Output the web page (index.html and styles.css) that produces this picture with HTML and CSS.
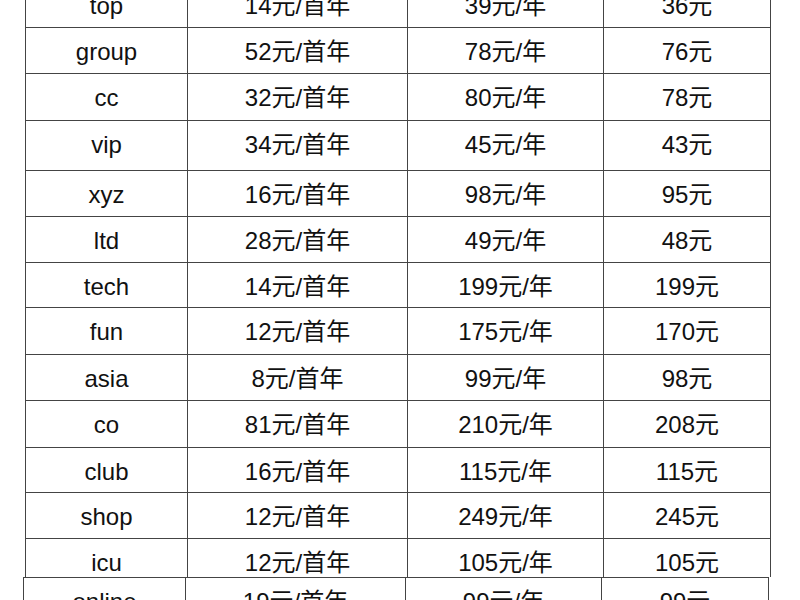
FILE: index.html
```html
<!DOCTYPE html>
<html lang="zh-CN">
<head>
<meta charset="utf-8">
<title>域名价格表</title>
<link rel="stylesheet" href="styles.css">
</head>
<body>
<div class="sheet">
  <div class="row h46"><div class="cell">top</div><div class="cell">14元/首年</div><div class="cell">39元/年</div><div class="cell">36元</div></div>
  <div class="row h46"><div class="cell">group</div><div class="cell">52元/首年</div><div class="cell">78元/年</div><div class="cell">76元</div></div>
  <div class="row h47"><div class="cell">cc</div><div class="cell">32元/首年</div><div class="cell">80元/年</div><div class="cell">78元</div></div>
  <div class="row h50"><div class="cell">vip</div><div class="cell">34元/首年</div><div class="cell">45元/年</div><div class="cell">43元</div></div>
  <div class="row h46"><div class="cell">xyz</div><div class="cell">16元/首年</div><div class="cell">98元/年</div><div class="cell">95元</div></div>
  <div class="row h46"><div class="cell">ltd</div><div class="cell">28元/首年</div><div class="cell">49元/年</div><div class="cell">48元</div></div>
  <div class="row h45"><div class="cell">tech</div><div class="cell">14元/首年</div><div class="cell">199元/年</div><div class="cell">199元</div></div>
  <div class="row h47"><div class="cell">fun</div><div class="cell">12元/首年</div><div class="cell">175元/年</div><div class="cell">170元</div></div>
  <div class="row h46"><div class="cell">asia</div><div class="cell">8元/首年</div><div class="cell">99元/年</div><div class="cell">98元</div></div>
  <div class="row h47"><div class="cell">co</div><div class="cell">81元/首年</div><div class="cell">210元/年</div><div class="cell">208元</div></div>
  <div class="row h45"><div class="cell">club</div><div class="cell">16元/首年</div><div class="cell">115元/年</div><div class="cell">115元</div></div>
  <div class="row h46"><div class="cell">shop</div><div class="cell">12元/首年</div><div class="cell">249元/年</div><div class="cell">245元</div></div>
  <div class="row h39"><div class="cell">icu</div><div class="cell">12元/首年</div><div class="cell">105元/年</div><div class="cell">105元</div></div>
</div>
<div class="sheet sheet-shifted">
  <div class="row h46"><div class="cell">online</div><div class="cell">19元/首年</div><div class="cell">99元/年</div><div class="cell">99元</div></div>
</div>
</body>
</html>
```
FILE: styles.css
```css
html, body {
  margin: 0;
  padding: 0;
  background: #ffffff;
  overflow: hidden;
}

body {
  font-family: "Liberation Sans", Arial, "Noto Sans CJK SC", sans-serif;
  font-size: 24px;
  color: #111111;
}

.sheet {
  width: 746px;
  margin-left: 25px;
  margin-top: -19px;
  border-left: 1px solid #444444;
  box-sizing: border-box;
}

.sheet-shifted {
  margin-top: 0;
  margin-left: 23px;
}

.row {
  display: grid;
  grid-template-columns: 162px 220px 196px 167px;
  border-top: 1px solid #444444;
  box-sizing: border-box;
  overflow: hidden;
}

.h39 { height: 39px; }
.h45 { height: 45px; }
.h46 { height: 46px; }
.h47 { height: 47px; }
.h50 { height: 50px; }

.cell {
  border-right: 1px solid #444444;
  box-sizing: border-box;
  text-align: center;
  line-height: 24px;
  padding-top: 12px;
  white-space: nowrap;
}
```
